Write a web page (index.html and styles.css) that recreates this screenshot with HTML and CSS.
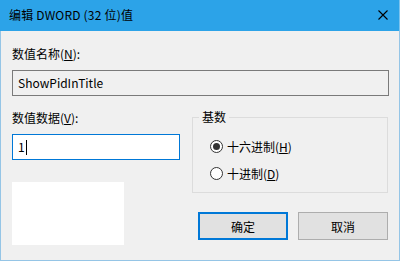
FILE: index.html
```html
<!DOCTYPE html>
<html lang="zh-CN">
<head>
<meta charset="utf-8">
<title>编辑 DWORD (32 位)值</title>
<link rel="stylesheet" href="styles.css">
</head>
<body>
<div class="window">
  <div class="titlebar">
    <span class="title">编辑 DWORD (32 位)值</span>
    <svg class="close" width="10" height="10" viewBox="0 0 10 10"><path d="M0.5 0.5 L9.5 9.5 M9.5 0.5 L0.5 9.5" stroke="#000" stroke-width="1.1" fill="none"/></svg>
  </div>
  <div class="content">
    <div class="label first">数值名称(<u>N</u>):</div>
    <div class="edit readonly">ShowPidInTitle</div>
    <div class="lower">
      <div class="left">
        <div class="label second">数值数据(<u>V</u>):</div>
        <div class="edit active"><span>1</span><span class="caret"></span></div>
        <div class="blank"></div>
      </div>
      <div class="right">
        <fieldset class="group">
          <legend>基数</legend>
          <div class="radio"><span class="dot checked"></span><span>十六进制(<u>H</u>)</span></div>
          <div class="radio"><span class="dot"></span><span>十进制(<u>D</u>)</span></div>
        </fieldset>
        <div class="buttons">
          <div class="btn default">确定</div>
          <div class="btn">取消</div>
        </div>
      </div>
    </div>
  </div>
</div>
</body>
</html>
```

FILE: styles.css
```css
html, body {
  margin: 0;
  padding: 0;
  background: #f0f0f0;
}
body {
  font-family: "Noto Sans CJK SC", "Noto Sans", sans-serif;
  font-size: 12px;
  color: #000;
}
u { text-decoration: underline; text-underline-offset: 1px; }
.window {
  width: 400px;
  height: 261px;
  display: flex;
  flex-direction: column;
}
.titlebar {
  height: 31px;
  flex: none;
  background: #2ca3e8;
  display: flex;
  align-items: center;
  padding: 0 11px 0 9px;
  box-sizing: border-box;
  border-right: 1px solid #7cc3ee;
}
.title {
  flex: 1;
  line-height: 16px;
  margin-top: -1px;
  letter-spacing: 0.2px;
}
.close { display: block; margin-top: -1px; }
.content {
  flex: 1;
  border: 1px solid #95c5e6;
  border-top: none;
  padding: 0 11px;
  box-sizing: border-box;
}
.label {
  line-height: 16px;
  height: 16px;
}
.label.first { margin-top: 15px; }
.edit {
  box-sizing: border-box;
  height: 26px;
  margin-top: 8px;
  border: 1px solid #7a7a7a;
  padding: 0 5px;
  line-height: 24px;
  display: flex;
  align-items: center;
}
.edit.readonly {
  width: 377px;
  background: #f0f0f0;
}
.edit.active {
  width: 168px;
  background: #fff;
  border-color: #0078d7;
}
.caret {
  width: 1px;
  height: 15px;
  background: #000;
  margin-left: 1px;
}
.lower {
  display: flex;
  gap: 12px;
}
.left { width: 168px; }
.label.second { margin-top: 14px; }
.blank {
  width: 112px;
  height: 63px;
  margin-top: 22px;
  background: #fff;
}
.right { width: 197px; }
.group {
  margin: 13px 0 0 0;
  height: 84px;
  box-sizing: border-box;
  border: 1px solid #dcdcdc;
  padding: 0 0 0 17px;
}
.group legend {
  padding: 0 3px;
  margin-left: -11px;
  line-height: 16px;
}
.radio {
  display: flex;
  align-items: center;
  height: 16px;
  gap: 4px;
  margin-top: 13px;
}
.radio + .radio { margin-top: 11px; }
.dot {
  width: 13px;
  height: 13px;
  box-sizing: border-box;
  border: 1px solid #333;
  border-radius: 50%;
  background: #fff;
  display: flex;
  align-items: center;
  justify-content: center;
}
.dot.checked::after {
  content: "";
  width: 7px;
  height: 7px;
  border-radius: 50%;
  background: #333;
}
.buttons {
  display: flex;
  gap: 10px;
  margin: 19px 0 0 6px;
}
.btn {
  width: 90px;
  height: 28px;
  box-sizing: border-box;
  background: #e1e1e1;
  border: 1px solid #adadad;
  display: flex;
  align-items: center;
  justify-content: center;
}
.btn.default {
  border: 2px solid #0078d7;
}
```
